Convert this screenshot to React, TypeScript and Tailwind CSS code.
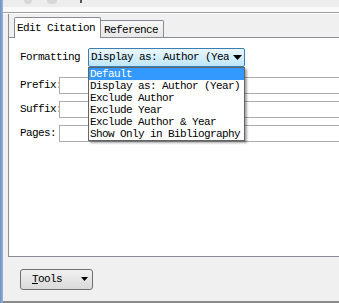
const items = [
  "Default",
  "Display as: Author (Year)",
  "Exclude Author",
  "Exclude Year",
  "Exclude Author & Year",
  "Show Only in Bibliography",
];

const font = "font-['SimSun','Liberation_Mono',monospace] text-[11px] tracking-[-0.6px] text-black";

const Field = ({ label }: { label: string }) => {
  return (
    <div className="flex items-center h-[17px]">
      <div className="w-[39px] overflow-hidden whitespace-nowrap leading-[17px]">{label}</div>
      <div className="flex-1 h-[17px] border border-[#abadb3] border-r-0 bg-white" />
    </div>
  );
};

export default function App() {
  return (
    <div className={`w-[339px] h-[303px] flex bg-[#f0f0f0] overflow-hidden ${font}`}>
      {/* window edge */}
      <div className="w-[3px] shrink-0 bg-gradient-to-r from-[#6f90c0] to-[#98b4dc]" />

      <div className="flex flex-col shrink-0 w-[346px]">
        {/* toolbar remains */}
        <div className="h-[7px] bg-[#ededed] flex items-start">
          <div className="ml-[21px] mt-0 w-[8px] h-[4px] bg-[#d8d8d8] rounded-b-sm" />
          <div className="ml-[15px] w-[10px] h-[4px] bg-[#d8d8d8] rounded-b-sm" />
          <div className="ml-[23px] w-[2px] h-[3px] bg-[#555]" />
        </div>
        <div className="h-[6px] bg-[#fafafa] border-b border-[#a0a0a0]" />
        <div className="h-px bg-white" />

        <div className="flex">
          <div className="w-[5px] shrink-0" />
          <div className="flex-1 flex flex-col border-l border-[#8e8f8f]">
            {/* tab strip */}
            <div className="h-[23px] flex items-end pl-[5px] relative z-10">
              <div className="h-[21px] w-[87px] -mb-px bg-white border border-b-0 border-[#898c95] rounded-t-[2px] pl-[2px] leading-[20px] whitespace-nowrap">
                Edit Citation
              </div>
              <div className="h-[17px] w-[63px] bg-gradient-to-b from-[#f7f7f7] to-[#e8e8e8] border border-l-0 border-b-0 border-[#898c95] rounded-tr-[2px] pl-[3px] leading-[18px] whitespace-nowrap">
                Reference
              </div>
            </div>

            {/* tab panel */}
            <div className="h-[220px] bg-white border-t border-b border-[#898c95] pl-[11px] pt-[10px] flex flex-col">
              <div className="flex items-center h-[19px]">
                <div className="w-[68px] whitespace-nowrap">Formatting</div>
                <div className="relative z-20">
                  <div className="w-[157px] h-[19px] flex items-center border border-[#3c7fb1] rounded-[2px] bg-gradient-to-b from-[#eaf6fd] to-[#bee6fd]">
                    <div className="w-[138px] ml-[2px] overflow-hidden whitespace-nowrap">Display as: Author (Year)</div>
                    <svg width="9" height="5" viewBox="0 0 9 5" className="ml-[4px]">
                      <path d="M0 0h9L4.5 5z" fill="#000" />
                    </svg>
                  </div>
                  <div className="absolute left-0 top-[19px] w-[157px] bg-white border border-[#646464] shadow-[2px_2px_2px_rgba(0,0,0,0.35)] leading-[12px]">
                    {items.map((item, i) => (
                      <div
                        key={item}
                        className={`h-[12px] pl-[1px] whitespace-nowrap ${i === 0 ? "bg-[#3399ff] text-white" : ""}`}
                      >
                        {item}
                      </div>
                    ))}
                  </div>
                </div>
              </div>
              <div className="mt-[10px]">
                <Field label="Prefix:" />
              </div>
              <div className="mt-[7px]">
                <Field label="Suffix:" />
              </div>
              <div className="mt-[7px]">
                <Field label="Pages:" />
              </div>
            </div>
          </div>
        </div>

        {/* bottom bar */}
        <div className="h-[44px] flex items-center pl-[17px]">
          <button className="w-[73px] h-[21px] flex items-center border border-[#707070] rounded-[3px] bg-gradient-to-b from-[#f2f2f2] to-[#d9d9d9] pl-[11px]">
            <span className="whitespace-nowrap">
              <span className="underline">T</span>ools
            </span>
            <svg width="7" height="4" viewBox="0 0 7 4" className="ml-[19px]">
              <path d="M0 0h7L3.5 4z" fill="#000" />
            </svg>
          </button>
        </div>
        <div className="h-[2px] bg-[#8a8a8a]" />
      </div>
    </div>
  );
}
